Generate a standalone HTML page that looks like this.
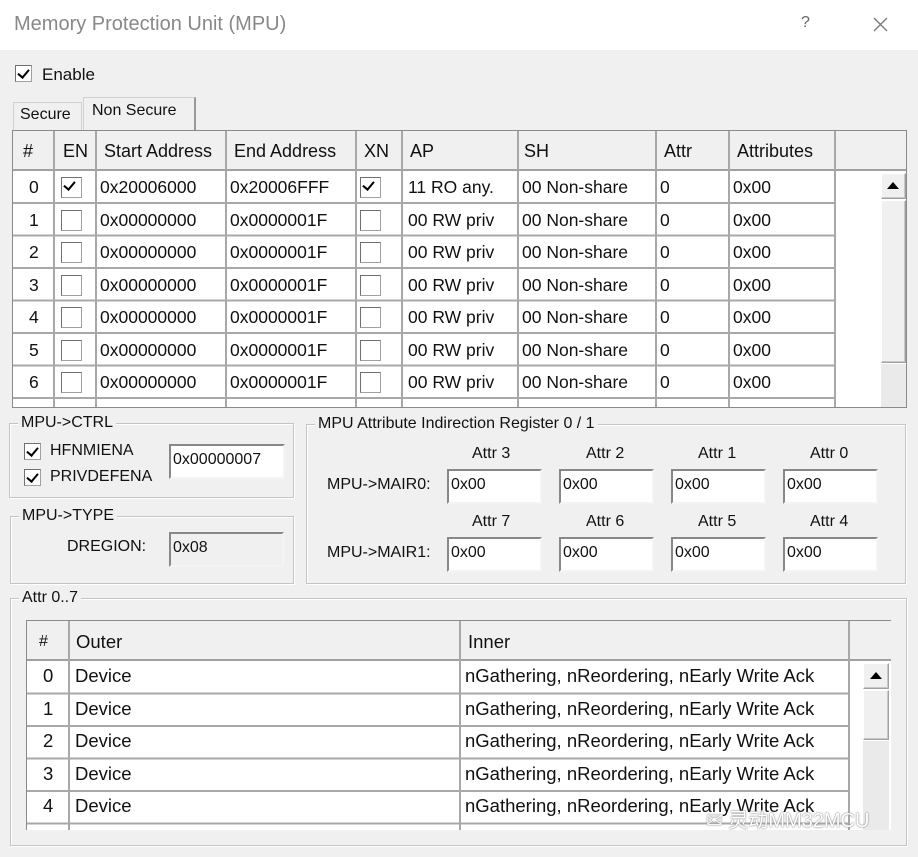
<!DOCTYPE html>
<html><head><meta charset="utf-8"><style>
*{box-sizing:border-box;margin:0;padding:0}
body{width:918px;height:857px;background:#f0f0f0;position:relative;overflow:hidden;font-family:"Liberation Sans","Noto Sans CJK SC",sans-serif;font-size:17px;color:#111}
.a{position:absolute;white-space:nowrap}
.title{left:0;top:0;width:918px;height:50px;background:#fff}
.cb{position:absolute;width:17px;height:17px;background:#fff;border:1px solid #a0a0a0;border-top-color:#707070;border-left-color:#707070}
.cb.c::after{content:"";position:absolute;left:4px;top:1px;width:5px;height:9px;border:solid #000;border-width:0 2.5px 2.5px 0;transform:rotate(40deg)}
.grp{position:absolute;border:1px solid #c4c4c4;box-shadow:inset 1px 1px 0 #fff,1px 1px 0 #fff}
.gl{position:absolute;background:#f0f0f0;padding:0 3px;font-size:16px;top:-11px;left:8px;line-height:20px}
.tb{position:absolute;background:#fff;border:2px solid #f4f4f4;border-top-color:#888;border-left-color:#888;font-size:16px;padding:3px 2px;line-height:22px}
.sb{position:absolute;background:#f0f0f0;border:1px solid #fff;border-right-color:#a0a0a0;border-bottom-color:#a0a0a0;box-shadow:inset -1px -1px 0 #c8c8c8}
.bt div span{font-size:18.5px}
</style></head><body>
<div class="a title"></div>
<div class="a" style="left:14px;top:13px;font-size:20px;color:#888">Memory Protection Unit (MPU)</div>
<div class="a" style="left:801px;top:14px;font-size:16px;color:#666">?</div>
<svg class="a" style="left:873px;top:17px" width="15" height="15"><path d="M1 1L14 14M14 1L1 14" stroke="#777" stroke-width="1.3"/></svg>

<div class="cb c" style="left:15px;top:65px"></div>
<div class="a" style="left:42px;top:65px">Enable</div>

<div class="a" style="left:13px;top:102px;width:69px;height:29px;border:1px solid #d0d0d0;border-bottom:none;background:#f0f0f0"></div>
<div class="a" style="left:20px;top:106px;font-size:16px">Secure</div>
<div class="a" style="left:83px;top:97px;width:113px;height:34px;border:1px solid #d0d0d0;border-right:2px solid #999;border-bottom:none;background:#f0f0f0"></div>
<div class="a" style="left:92px;top:102px;font-size:16px">Non Secure</div>

<div class="a" style="left:12px;top:130px;width:895px;height:278px;border:1px solid #8a8a8a;background:#fff;overflow:hidden">
<div class="a" style="left:0;top:0;width:893px;height:40px;background:#f0f0f0;border-bottom:2px solid #a0a0a0"></div>
<svg class="a" style="left:0;top:0" width="893" height="278">
<g stroke="#a8a8a8" stroke-width="2">
<line x1="41" y1="0" x2="41" y2="278"/><line x1="83" y1="0" x2="83" y2="278"/><line x1="213" y1="0" x2="213" y2="278"/><line x1="343" y1="0" x2="343" y2="278"/><line x1="389" y1="0" x2="389" y2="278"/><line x1="505" y1="0" x2="505" y2="278"/><line x1="643" y1="0" x2="643" y2="278"/><line x1="716" y1="0" x2="716" y2="278"/><line x1="822" y1="0" x2="822" y2="278"/>
<line x1="0" y1="72" x2="822" y2="72"/><line x1="0" y1="104.5" x2="822" y2="104.5"/><line x1="0" y1="137" x2="822" y2="137"/><line x1="0" y1="169.5" x2="822" y2="169.5"/><line x1="0" y1="202" x2="822" y2="202"/><line x1="0" y1="234.5" x2="822" y2="234.5"/><line x1="0" y1="267" x2="822" y2="267"/>
</g></svg>
<div class="a" style="left:0;top:0;line-height:40px;font-size:18px">
<span class="a" style="left:10px">#</span><span class="a" style="left:50px">EN</span><span class="a" style="left:91px">Start Address</span><span class="a" style="left:221px">End Address</span><span class="a" style="left:351px">XN</span><span class="a" style="left:397px">AP</span><span class="a" style="left:511px">SH</span><span class="a" style="left:651px">Attr</span><span class="a" style="left:724px">Attributes</span></div>
<div class="sb" style="left:868px;top:42px;width:25px;height:26px"></div>
<div class="a" style="left:874px;top:51px;width:0;height:0;border-left:6px solid transparent;border-right:6px solid transparent;border-bottom:7px solid #000"></div>
<div class="sb" style="left:868px;top:69px;width:25px;height:163px"></div>
<div class="a" style="left:868px;top:233px;width:25px;height:45px;background:#eaeaea"></div>
</div>
<div class="a" style="left:12px;top:171px;font-size:17.5px;line-height:32.5px">
<div style="position:relative;height:32.5px"><span class="a" style="left:17px">0</span><div class="cb c" style="left:49px;top:6px;width:21px;height:21px"></div><span class="a" style="left:88px">0x20006000</span><span class="a" style="left:218px">0x20006FFF</span><div class="cb c" style="left:348px;top:6px;width:21px;height:21px"></div><span class="a" style="left:396px">11 RO any.</span><span class="a" style="left:510px">00 Non-share</span><span class="a" style="left:648px">0</span><span class="a" style="left:721px">0x00</span></div>
<div style="position:relative;height:32.5px"><span class="a" style="left:17px">1</span><div class="cb" style="left:49px;top:6px;width:21px;height:21px"></div><span class="a" style="left:88px">0x00000000</span><span class="a" style="left:218px">0x0000001F</span><div class="cb" style="left:348px;top:6px;width:21px;height:21px"></div><span class="a" style="left:396px">00 RW priv</span><span class="a" style="left:510px">00 Non-share</span><span class="a" style="left:648px">0</span><span class="a" style="left:721px">0x00</span></div>
<div style="position:relative;height:32.5px"><span class="a" style="left:17px">2</span><div class="cb" style="left:49px;top:6px;width:21px;height:21px"></div><span class="a" style="left:88px">0x00000000</span><span class="a" style="left:218px">0x0000001F</span><div class="cb" style="left:348px;top:6px;width:21px;height:21px"></div><span class="a" style="left:396px">00 RW priv</span><span class="a" style="left:510px">00 Non-share</span><span class="a" style="left:648px">0</span><span class="a" style="left:721px">0x00</span></div>
<div style="position:relative;height:32.5px"><span class="a" style="left:17px">3</span><div class="cb" style="left:49px;top:6px;width:21px;height:21px"></div><span class="a" style="left:88px">0x00000000</span><span class="a" style="left:218px">0x0000001F</span><div class="cb" style="left:348px;top:6px;width:21px;height:21px"></div><span class="a" style="left:396px">00 RW priv</span><span class="a" style="left:510px">00 Non-share</span><span class="a" style="left:648px">0</span><span class="a" style="left:721px">0x00</span></div>
<div style="position:relative;height:32.5px"><span class="a" style="left:17px">4</span><div class="cb" style="left:49px;top:6px;width:21px;height:21px"></div><span class="a" style="left:88px">0x00000000</span><span class="a" style="left:218px">0x0000001F</span><div class="cb" style="left:348px;top:6px;width:21px;height:21px"></div><span class="a" style="left:396px">00 RW priv</span><span class="a" style="left:510px">00 Non-share</span><span class="a" style="left:648px">0</span><span class="a" style="left:721px">0x00</span></div>
<div style="position:relative;height:32.5px"><span class="a" style="left:17px">5</span><div class="cb" style="left:49px;top:6px;width:21px;height:21px"></div><span class="a" style="left:88px">0x00000000</span><span class="a" style="left:218px">0x0000001F</span><div class="cb" style="left:348px;top:6px;width:21px;height:21px"></div><span class="a" style="left:396px">00 RW priv</span><span class="a" style="left:510px">00 Non-share</span><span class="a" style="left:648px">0</span><span class="a" style="left:721px">0x00</span></div>
<div style="position:relative;height:32.5px"><span class="a" style="left:17px">6</span><div class="cb" style="left:49px;top:6px;width:21px;height:21px"></div><span class="a" style="left:88px">0x00000000</span><span class="a" style="left:218px">0x0000001F</span><div class="cb" style="left:348px;top:6px;width:21px;height:21px"></div><span class="a" style="left:396px">00 RW priv</span><span class="a" style="left:510px">00 Non-share</span><span class="a" style="left:648px">0</span><span class="a" style="left:721px">0x00</span></div>
</div>

<div class="grp" style="left:9px;top:423px;width:285px;height:75px"><div class="gl" style="left:8px">MPU-&gt;CTRL</div></div>
<div class="cb c" style="left:24px;top:443px"></div><div class="a" style="left:50px;top:442px;font-size:16px">HFNMIENA</div>
<div class="cb c" style="left:24px;top:469px"></div><div class="a" style="left:50px;top:468px;font-size:16px">PRIVDEFENA</div>
<div class="tb" style="left:169px;top:444px;width:116px;height:35px">0x00000007</div>

<div class="grp" style="left:10px;top:516px;width:284px;height:68px"><div class="gl" style="left:8px">MPU-&gt;TYPE</div></div>
<div class="a" style="left:67px;top:538px;font-size:16px">DREGION:</div>
<div class="tb" style="left:169px;top:532px;width:115px;height:35px;background:#f0f0f0">0x08</div>

<div class="grp" style="left:306px;top:424px;width:600px;height:160px"><div class="gl" style="left:8px">MPU Attribute Indirection Register 0 / 1</div></div>
<div class="a" style="left:472px;top:445px;font-size:16px">Attr 3</div>
<div class="a" style="left:586px;top:445px;font-size:16px">Attr 2</div>
<div class="a" style="left:698px;top:445px;font-size:16px">Attr 1</div>
<div class="a" style="left:810px;top:445px;font-size:16px">Attr 0</div>
<div class="a" style="left:327px;top:476px;font-size:16px">MPU-&gt;MAIR0:</div>
<div class="tb" style="left:447px;top:469px;width:95px;height:35px">0x00</div>
<div class="tb" style="left:559px;top:469px;width:95px;height:35px">0x00</div>
<div class="tb" style="left:671px;top:469px;width:95px;height:35px">0x00</div>
<div class="tb" style="left:783px;top:469px;width:95px;height:35px">0x00</div>
<div class="a" style="left:472px;top:513px;font-size:16px">Attr 7</div>
<div class="a" style="left:586px;top:513px;font-size:16px">Attr 6</div>
<div class="a" style="left:698px;top:513px;font-size:16px">Attr 5</div>
<div class="a" style="left:810px;top:513px;font-size:16px">Attr 4</div>
<div class="a" style="left:327px;top:544px;font-size:16px">MPU-&gt;MAIR1:</div>
<div class="tb" style="left:447px;top:537px;width:95px;height:35px">0x00</div>
<div class="tb" style="left:559px;top:537px;width:95px;height:35px">0x00</div>
<div class="tb" style="left:671px;top:537px;width:95px;height:35px">0x00</div>
<div class="tb" style="left:783px;top:537px;width:95px;height:35px">0x00</div>

<div class="grp" style="left:10px;top:598px;width:897px;height:248px"><div class="gl" style="left:8px">Attr 0..7</div></div>
<div class="a" style="left:26px;top:620px;width:865px;height:210px;border:1px solid #8a8a8a;border-right:none;border-bottom:none;background:#fff;overflow:hidden">
<div class="a" style="left:0;top:0;width:864px;height:40px;background:#f0f0f0;border-bottom:2px solid #a0a0a0"></div>
<svg class="a" style="left:0;top:0" width="864" height="210">
<g stroke="#a8a8a8" stroke-width="2">
<line x1="42" y1="0" x2="42" y2="210"/><line x1="433" y1="0" x2="433" y2="210"/><line x1="822" y1="0" x2="822" y2="210"/>
<line x1="0" y1="72.5" x2="822" y2="72.5"/><line x1="0" y1="105" x2="822" y2="105"/><line x1="0" y1="137.5" x2="822" y2="137.5"/><line x1="0" y1="170" x2="822" y2="170"/><line x1="0" y1="202.5" x2="822" y2="202.5"/>
</g></svg>
<div class="a" style="left:0;top:0;line-height:42px;font-size:18.5px"><span class="a" style="left:12px;font-size:16px">#</span><span class="a" style="left:49px">Outer</span><span class="a" style="left:441px">Inner</span></div>
<div class="a" style="left:823px;top:40px;width:42px;height:170px;background:#fff"></div>
<div class="sb" style="left:836px;top:42px;width:26px;height:26px"></div>
<div class="a" style="left:843px;top:51px;width:0;height:0;border-left:6px solid transparent;border-right:6px solid transparent;border-bottom:7px solid #000"></div>
<div class="sb" style="left:836px;top:69px;width:26px;height:50px"></div>
<div class="a" style="left:836px;top:120px;width:26px;height:90px;background:#eaeaea"></div>
</div>
<div class="a bt" style="left:26px;top:660px;line-height:32.5px;width:820px">
<div style="position:relative;height:32.5px"><span class="a" style="left:17px">0</span><span class="a" style="left:49px">Device</span><span class="a" style="left:439px">nGathering, nReordering, nEarly Write Ack</span></div>
<div style="position:relative;height:32.5px"><span class="a" style="left:17px">1</span><span class="a" style="left:49px">Device</span><span class="a" style="left:439px">nGathering, nReordering, nEarly Write Ack</span></div>
<div style="position:relative;height:32.5px"><span class="a" style="left:17px">2</span><span class="a" style="left:49px">Device</span><span class="a" style="left:439px">nGathering, nReordering, nEarly Write Ack</span></div>
<div style="position:relative;height:32.5px"><span class="a" style="left:17px">3</span><span class="a" style="left:49px">Device</span><span class="a" style="left:439px">nGathering, nReordering, nEarly Write Ack</span></div>
<div style="position:relative;height:32.5px"><span class="a" style="left:17px">4</span><span class="a" style="left:49px">Device</span><span class="a" style="left:439px">nGathering, nReordering, nEarly Write Ack</span></div>
</div>
<div class="a" style="left:706px;top:804px;font-size:20px;color:#fff;text-shadow:0 0 1px #777,0 0 2px #999">✉ 灵动MM32MCU</div>
</body></html>
